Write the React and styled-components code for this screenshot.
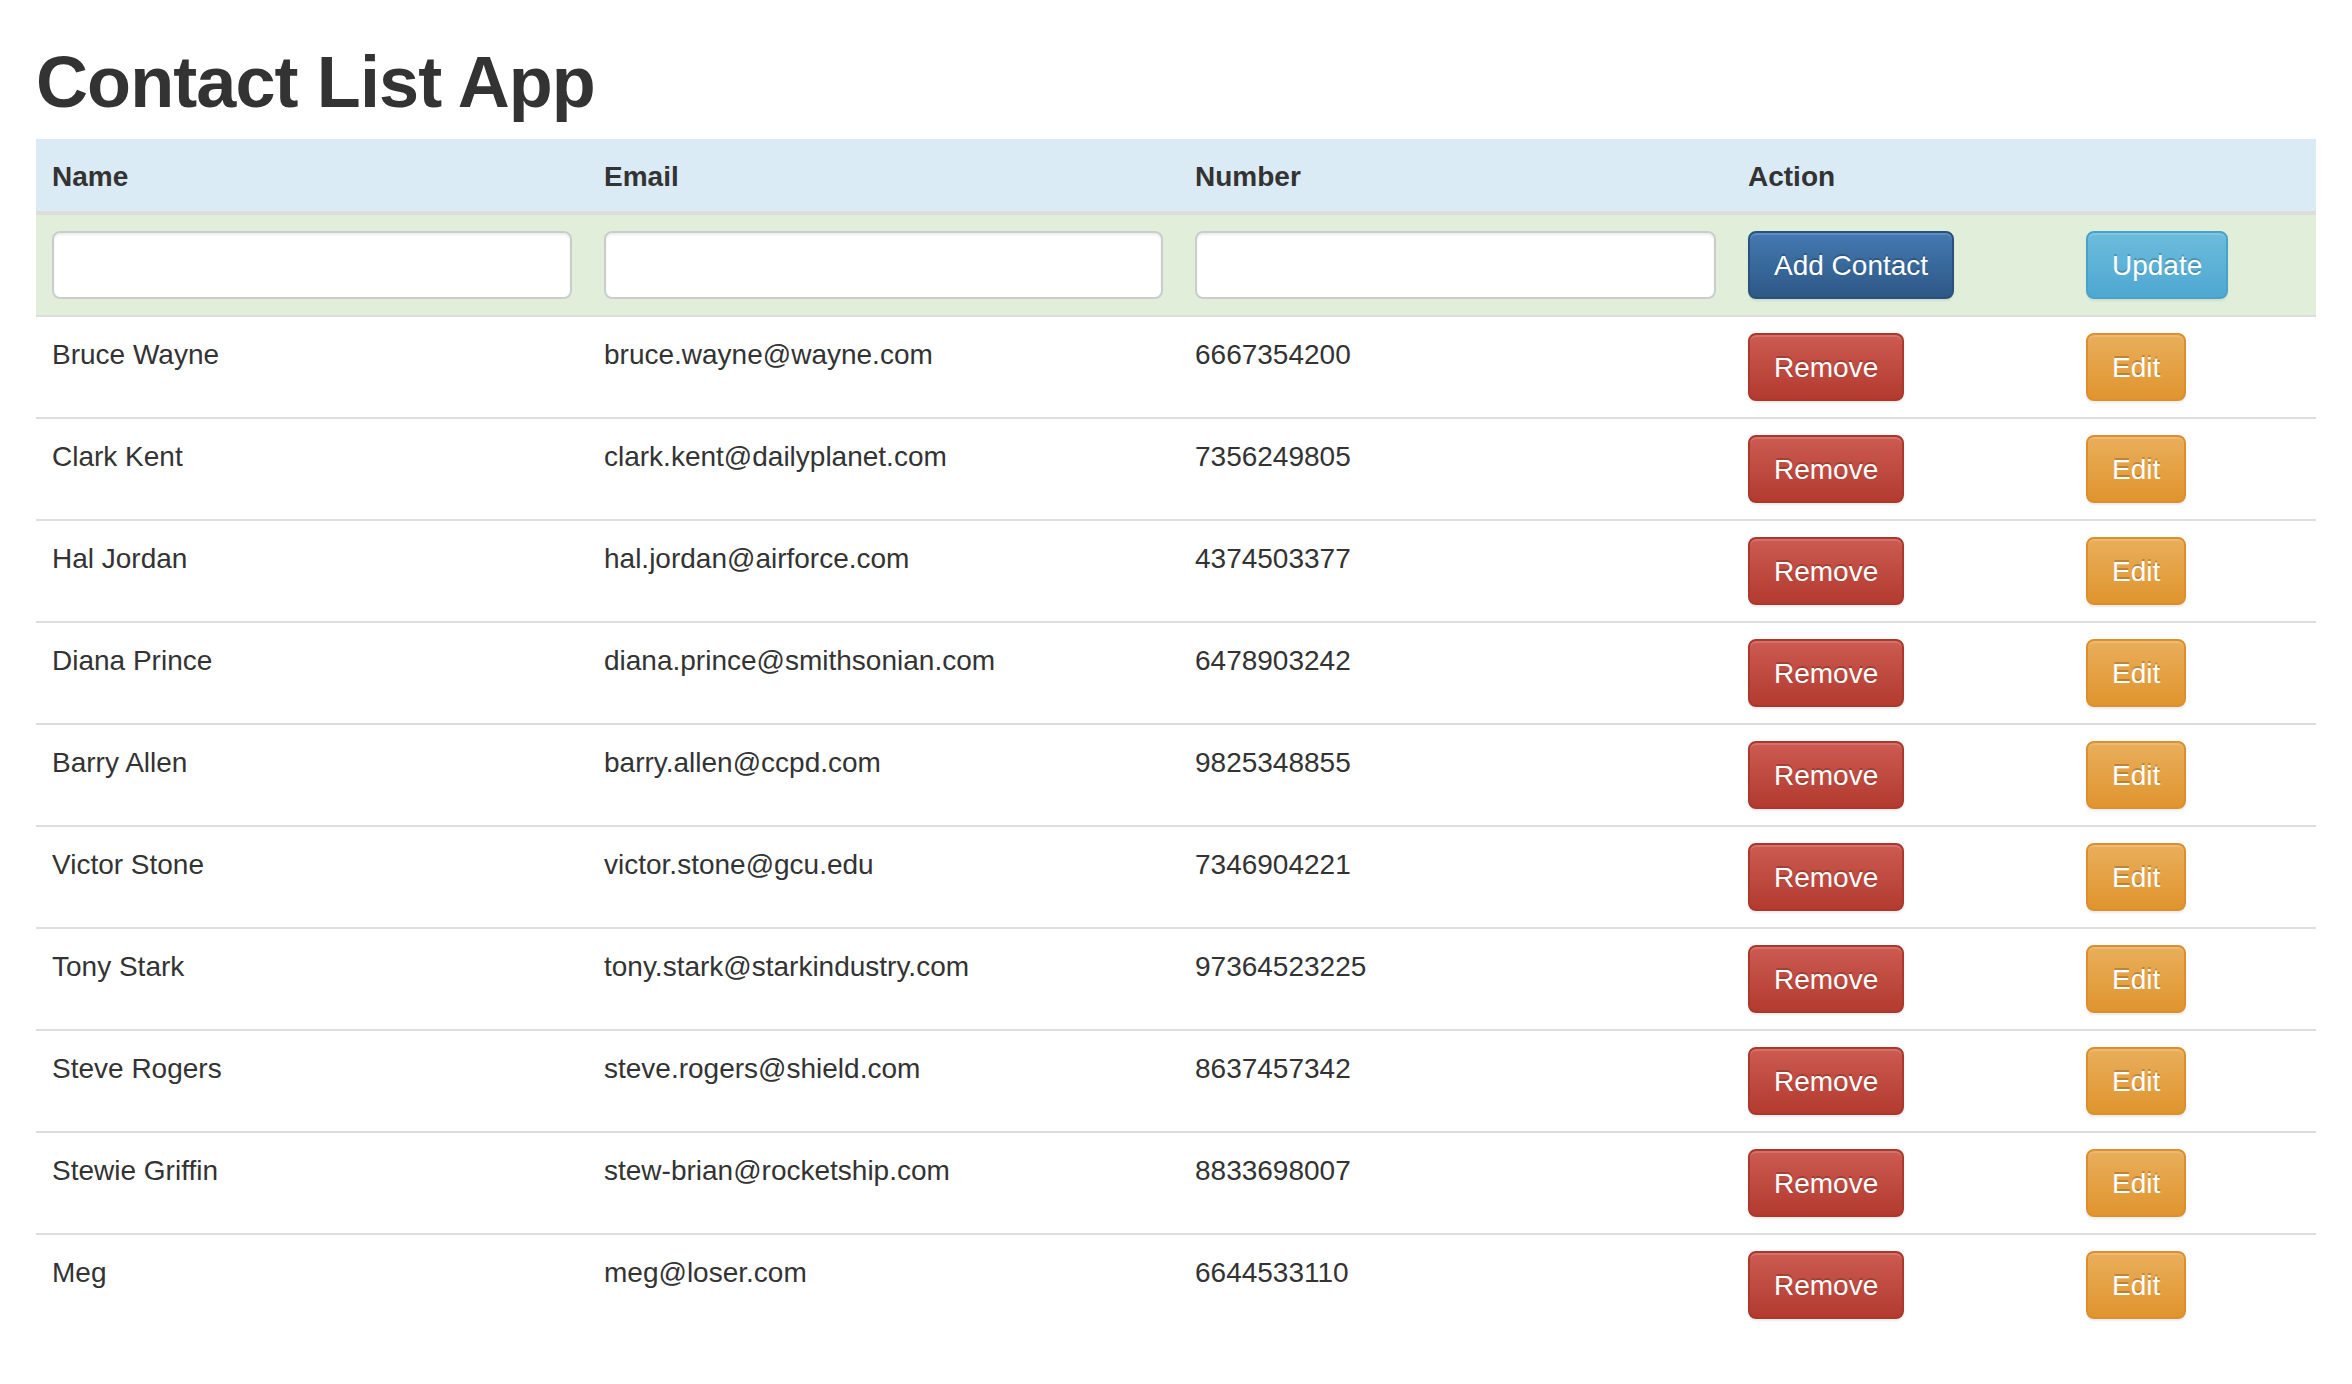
import styled, { createGlobalStyle } from "styled-components";

const GlobalStyle = createGlobalStyle`
  body {
    margin: 0;
    background: #fff;
    color: #333;
    font-family: "Liberation Sans", Arial, sans-serif;
    font-size: 28px;
  }
`;

const Page = styled.div`
  padding: 42px 36px 0;
`;

const Title = styled.h1`
  margin: 0 0 18px;
  padding-top: 1px;
  height: 78px;
  font-size: 72px;
  line-height: 79px;
  font-weight: bold;
  letter-spacing: -0.9px;
  color: #333;
`;

const Table = styled.table`
  width: 100%;
  border-collapse: separate;
  border-spacing: 0;
  table-layout: fixed;
  margin-bottom: 40px;
`;

const Col = styled.col`
  width: ${(p) => p.$w}px;
`;

const HeadRow = styled.tr`
  background: #dbebf5;
`;

const Th = styled.th`
  padding: 18px 16px 14px;
  line-height: 40px;
  text-align: left;
  font-weight: bold;
  border-bottom: 4px solid #ddd;
`;

const FormRow = styled.tr`
  background: #e1efda;
`;

const Td = styled.td`
  padding: ${(p) => (p.$text ? "18px 16px 14px" : "16px")};
  line-height: 40px;
  vertical-align: top;
  border-top: ${(p) => (p.$first ? "none" : "2px solid #ddd")};
`;

const Input = styled.input`
  display: block;
  box-sizing: border-box;
  width: 100%;
  height: 68px;
  padding: 12px 24px;
  font: inherit;
  color: #555;
  background: #fff;
  border: 2px solid #ccc;
  border-radius: 8px;
  box-shadow: inset 0 2px 2px rgba(0, 0, 0, 0.075);
  outline: none;
`;

const variants = {
  primary: { top: "#4479b1", bottom: "#2d5886", border: "#2a5280" },
  info: { top: "#6cbcdc", bottom: "#4ea8d1", border: "#48a2cb" },
  danger: { top: "#cc5b51", bottom: "#b33b2f", border: "#ac372c" },
  warning: { top: "#e9ae5b", bottom: "#e0952e", border: "#dc8f2a" },
};

const Button = styled.button`
  display: inline-block;
  box-sizing: border-box;
  height: 68px;
  padding: 13px 24px 11px;
  font: inherit;
  line-height: 40px;
  color: #fff;
  white-space: nowrap;
  cursor: pointer;
  border: 2px solid ${(p) => variants[p.$variant].border};
  border-radius: 8px;
  background: linear-gradient(
    to bottom,
    ${(p) => variants[p.$variant].top} 0,
    ${(p) => variants[p.$variant].bottom} 100%
  );
  text-shadow: 0 -2px 0 rgba(0, 0, 0, 0.2);
  box-shadow: inset 0 2px 0 rgba(255, 255, 255, 0.15),
    0 2px 2px rgba(0, 0, 0, 0.075);
`;

const contacts = [
  ["Bruce Wayne", "bruce.wayne@wayne.com", "6667354200"],
  ["Clark Kent", "clark.kent@dailyplanet.com", "7356249805"],
  ["Hal Jordan", "hal.jordan@airforce.com", "4374503377"],
  ["Diana Prince", "diana.prince@smithsonian.com", "6478903242"],
  ["Barry Allen", "barry.allen@ccpd.com", "9825348855"],
  ["Victor Stone", "victor.stone@gcu.edu", "7346904221"],
  ["Tony Stark", "tony.stark@starkindustry.com", "97364523225"],
  ["Steve Rogers", "steve.rogers@shield.com", "8637457342"],
  ["Stewie Griffin", "stew-brian@rocketship.com", "8833698007"],
  ["Meg", "meg@loser.com", "6644533110"],
];

const App = () => {
  return (
    <Page>
      <GlobalStyle />
      <Title>Contact List App</Title>
      <Table>
        <colgroup>
          <Col $w={552} />
          <Col $w={591} />
          <Col $w={553} />
          <Col $w={338} />
          <Col $w={246} />
        </colgroup>
        <thead>
          <HeadRow>
            <Th>Name</Th>
            <Th>Email</Th>
            <Th>Number</Th>
            <Th>Action</Th>
            <Th></Th>
          </HeadRow>
        </thead>
        <tbody>
          <FormRow>
            <Td $first><Input /></Td>
            <Td $first><Input /></Td>
            <Td $first><Input /></Td>
            <Td $first><Button $variant="primary">Add Contact</Button></Td>
            <Td $first><Button $variant="info">Update</Button></Td>
          </FormRow>
          {contacts.map(([name, email, number]) => (
            <tr key={email}>
              <Td $text>{name}</Td>
              <Td $text>{email}</Td>
              <Td $text>{number}</Td>
              <Td><Button $variant="danger">Remove</Button></Td>
              <Td><Button $variant="warning">Edit</Button></Td>
            </tr>
          ))}
        </tbody>
      </Table>
    </Page>
  );
};

export default App;
